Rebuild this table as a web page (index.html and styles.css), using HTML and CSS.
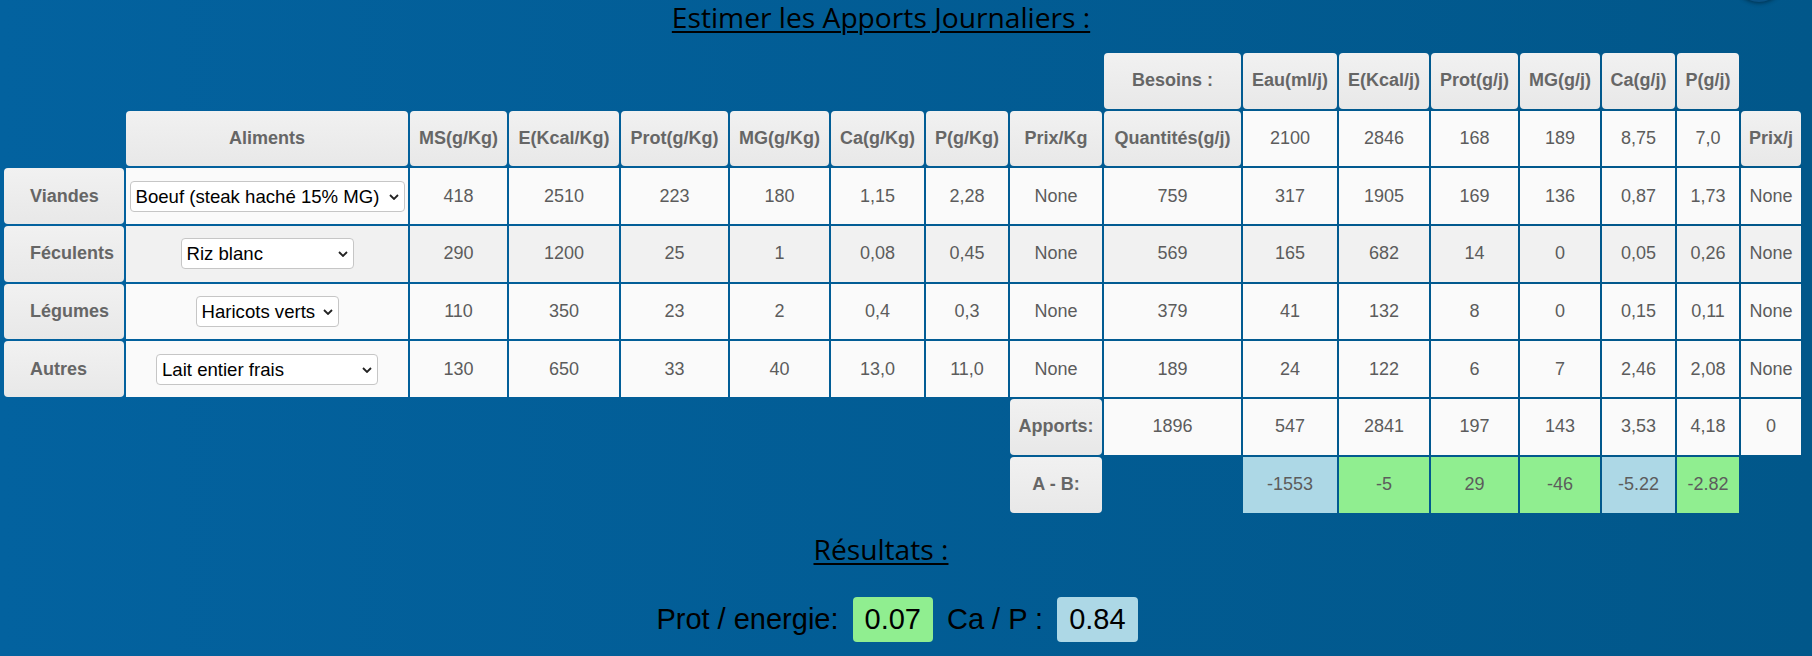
FILE: index.html
```html
<!DOCTYPE html>
<html lang="fr">
<head>
<meta charset="utf-8">
<title>Estimer les Apports Journaliers</title>
<link rel="stylesheet" href="styles.css">
</head>
<body>
<div class="fab"></div>
<main class="page">
  <h1 class="heading"><span>Estimer les Apports Journaliers :</span></h1>
  <table class="grid">
    <colgroup>
      <col class="c-label"><col class="c-food"><col class="c-ms"><col class="c-e"><col class="c-prot"><col class="c-mg"><col class="c-ca"><col class="c-p"><col class="c-prix"><col class="c-qte"><col class="c-eau"><col class="c-ej"><col class="c-protj"><col class="c-mgj"><col class="c-caj"><col class="c-pj"><col class="c-prixj">
    </colgroup>
    <tr>
      <td class="blank"></td><td class="blank"></td><td class="blank"></td><td class="blank"></td><td class="blank"></td><td class="blank"></td><td class="blank"></td><td class="blank"></td><td class="blank"></td>
      <th>Besoins :</th><th>Eau(ml/j)</th><th>E(Kcal/j)</th><th>Prot(g/j)</th><th>MG(g/j)</th><th>Ca(g/j)</th><th>P(g/j)</th>
      <td class="blank"></td>
    </tr>
    <tr>
      <td class="blank"></td>
      <th>Aliments</th><th>MS(g/Kg)</th><th>E(Kcal/Kg)</th><th>Prot(g/Kg)</th><th>MG(g/Kg)</th><th>Ca(g/Kg)</th><th>P(g/Kg)</th><th>Prix/Kg</th><th>Quantités(g/j)</th>
      <td>2100</td><td>2846</td><td>168</td><td>189</td><td>8,75</td><td>7,0</td>
      <th>Prix/j</th>
    </tr>
    <tr>
      <th class="rowh">Viandes</th>
      <td><span class="pick"><select class="sel w-viande"><option>Boeuf (steak haché 15% MG)</option></select><svg class="chev" width="10" height="6" viewBox="0 0 10 6"><path d="M1 1 L5 5 L9 1" fill="none" stroke="#222" stroke-width="1.8"/></svg></span></td>
      <td>418</td><td>2510</td><td>223</td><td>180</td><td>1,15</td><td>2,28</td><td>None</td><td>759</td><td>317</td><td>1905</td><td>169</td><td>136</td><td>0,87</td><td>1,73</td><td>None</td>
    </tr>
    <tr class="alt">
      <th class="rowh">Féculents</th>
      <td><span class="pick"><select class="sel w-feculent"><option>Riz blanc</option></select><svg class="chev" width="10" height="6" viewBox="0 0 10 6"><path d="M1 1 L5 5 L9 1" fill="none" stroke="#222" stroke-width="1.8"/></svg></span></td>
      <td>290</td><td>1200</td><td>25</td><td>1</td><td>0,08</td><td>0,45</td><td>None</td><td>569</td><td>165</td><td>682</td><td>14</td><td>0</td><td>0,05</td><td>0,26</td><td>None</td>
    </tr>
    <tr>
      <th class="rowh">Légumes</th>
      <td><span class="pick"><select class="sel w-legume"><option>Haricots verts</option></select><svg class="chev" width="10" height="6" viewBox="0 0 10 6"><path d="M1 1 L5 5 L9 1" fill="none" stroke="#222" stroke-width="1.8"/></svg></span></td>
      <td>110</td><td>350</td><td>23</td><td>2</td><td>0,4</td><td>0,3</td><td>None</td><td>379</td><td>41</td><td>132</td><td>8</td><td>0</td><td>0,15</td><td>0,11</td><td>None</td>
    </tr>
    <tr>
      <th class="rowh">Autres</th>
      <td><span class="pick"><select class="sel w-autre"><option>Lait entier frais</option></select><svg class="chev" width="10" height="6" viewBox="0 0 10 6"><path d="M1 1 L5 5 L9 1" fill="none" stroke="#222" stroke-width="1.8"/></svg></span></td>
      <td>130</td><td>650</td><td>33</td><td>40</td><td>13,0</td><td>11,0</td><td>None</td><td>189</td><td>24</td><td>122</td><td>6</td><td>7</td><td>2,46</td><td>2,08</td><td>None</td>
    </tr>
    <tr>
      <td class="blank"></td><td class="blank"></td><td class="blank"></td><td class="blank"></td><td class="blank"></td><td class="blank"></td><td class="blank"></td><td class="blank"></td>
      <th>Apports:</th>
      <td>1896</td><td>547</td><td>2841</td><td>197</td><td>143</td><td>3,53</td><td>4,18</td><td>0</td>
    </tr>
    <tr>
      <td class="blank"></td><td class="blank"></td><td class="blank"></td><td class="blank"></td><td class="blank"></td><td class="blank"></td><td class="blank"></td><td class="blank"></td>
      <th>A - B:</th>
      <td class="blank"></td>
      <td class="low">-1553</td><td class="ok">-5</td><td class="ok">29</td><td class="ok">-46</td><td class="low">-5.22</td><td class="ok">-2.82</td>
      <td class="blank"></td>
    </tr>
  </table>
  <h2 class="heading sub"><span>Résultats :</span></h2>
  <div class="ratios">
    <span class="lbl">Prot / energie:</span>
    <span class="badge ok">0.07</span>
    <span class="lbl">Ca / P :</span>
    <span class="badge low">0.84</span>
  </div>
</main>
</body>
</html>
```
FILE: styles.css
```css
html, body {
  margin: 0;
  padding: 0;
  height: 100%;
  overflow: hidden;
}
body {
  background: linear-gradient(to right, #03629f, #01578a);
  font-family: "Liberation Sans", Arial, sans-serif;
  position: relative;
}
.fab {
  position: absolute;
  top: -50px;
  left: 1733px;
  width: 52px;
  height: 52px;
  border-radius: 50%;
  background: #0a5284;
  box-shadow: 0 1px 4px rgba(0, 0, 0, 0.45);
}
.page {
  display: flex;
  flex-direction: column;
}
.heading {
  margin: 0 0 17px 0;
  padding-right: 50px;
  text-align: center;
  font-family: "Open Sans", "Noto Sans", sans-serif;
  font-weight: 400;
  font-size: 28.2px;
  line-height: 34px;
  color: #000;
}
.heading span {
  text-decoration: underline;
  text-decoration-thickness: 2px;
  text-underline-offset: 3px;
}
.sub {
  margin: 17px 0 0 0;
}
.grid {
  table-layout: fixed;
  width: 1801px;
  margin-left: 2px;
  border-collapse: separate;
  border-spacing: 2px;
  font-size: 18px;
}
.c-label { width: 120px; }
.c-food { width: 282px; }
.c-ms { width: 97px; }
.c-e { width: 110px; }
.c-prot { width: 107px; }
.c-mg { width: 99px; }
.c-ca { width: 93px; }
.c-p { width: 82px; }
.c-prix { width: 92px; }
.c-qte { width: 137px; }
.c-eau { width: 94px; }
.c-ej { width: 90px; }
.c-protj { width: 87px; }
.c-mgj { width: 80px; }
.c-caj { width: 73px; }
.c-pj { width: 62px; }
.c-prixj { width: 60px; }
.grid td, .grid th {
  box-sizing: border-box;
  height: 55.7px;
  padding: 0;
  text-align: center;
  vertical-align: middle;
  white-space: nowrap;
}
.grid td {
  background: #fafafa;
  color: #5c5c5c;
  font-weight: 400;
}
.grid tr.alt td {
  background: #f1f1f1;
}
.grid th {
  background: linear-gradient(to bottom, #f1f1f1, #e8e8e8);
  color: #666;
  font-weight: 700;
  border-radius: 4px;
}
.grid th.rowh {
  text-align: left;
  padding-left: 26px;
}
.grid td.blank {
  background: transparent;
}
.grid td.ok, .badge.ok {
  background: #90ee90;
}
.grid td.low, .badge.low {
  background: #add8e6;
}
.pick {
  position: relative;
  display: inline-block;
  vertical-align: middle;
}
.sel {
  -webkit-appearance: none;
  appearance: none;
  box-sizing: border-box;
  height: 31px;
  margin: 0;
  padding: 0 20px 0 5px;
  border: 1px solid #c6c6c6;
  border-radius: 4px;
  background: #fff;
  color: #000;
  font-family: "Liberation Sans", Arial, sans-serif;
  font-size: 18.6px;
  display: block;
}
.w-viande { width: 275px; }
.w-feculent { width: 173px; }
.w-legume { width: 143px; }
.w-autre { width: 222px; }
.chev {
  position: absolute;
  right: 6px;
  top: 13px;
}
.ratios {
  margin-top: 31px;
  padding-right: 18px;
  display: flex;
  justify-content: center;
  align-items: center;
  gap: 14px;
  font-size: 29px;
  color: #000;
}
.lbl {
  line-height: 33px;
}
.badge {
  line-height: 33px;
  padding: 6px 12px;
  border-radius: 4px;
}
```
